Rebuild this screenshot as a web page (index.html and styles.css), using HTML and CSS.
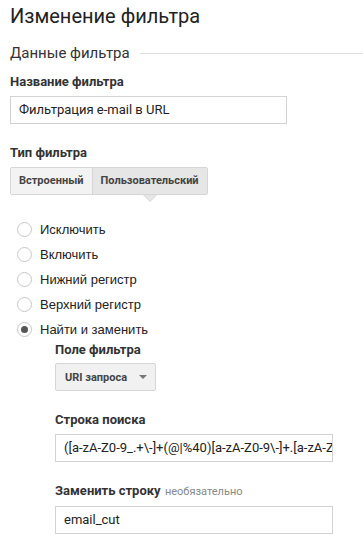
FILE: index.html
```html
<!DOCTYPE html>
<html>
<head>
<meta charset="utf-8">
<link rel="stylesheet" href="styles.css">
</head>
<body>
<div class="page">
  <h1 class="title">Изменение фильтра</h1>
  <div class="section-head"><span class="section-name">Данные фильтра</span><span class="section-line"></span></div>

  <div class="label name-label">Название фильтра</div>
  <div class="input name-input">Фильтрация e-mail в URL</div>

  <div class="label type-label">Тип фильтра</div>
  <div class="tabs">
    <div class="tab">Встроенный</div>
    <div class="tab active">Пользовательский</div>
  </div>

  <ul class="radios">
    <li class="radio"><span class="circle"></span>Исключить</li>
    <li class="radio"><span class="circle"></span>Включить</li>
    <li class="radio"><span class="circle"></span>Нижний регистр</li>
    <li class="radio"><span class="circle"></span>Верхний регистр</li>
    <li class="radio"><span class="circle checked"></span>Найти и заменить</li>
  </ul>

  <div class="sub">
    <div class="label field-label">Поле фильтра</div>
    <div class="select"><span>URI запроса</span><span class="caret"></span></div>

    <div class="label search-label">Строка поиска</div>
    <div class="input wide">([a-zA-Z0-9_.+\-]+(@|%40)[a-zA-Z0-9\-]+.[a-zA-Z0-9\-.]+)</div>

    <div class="label replace-label">Заменить строку <span class="optional">необязательно</span></div>
    <div class="input wide">email_cut</div>
  </div>
</div>
</body>
</html>
```
FILE: styles.css
```css
html, body {
  margin: 0;
  padding: 0;
  background: #fff;
}
.page {
  padding: 4px 0 0 10px;
  font-family: Roboto, "Liberation Sans", sans-serif;
  color: #222;
}
.title {
  margin: 0;
  font-size: 20px;
  font-weight: 400;
  line-height: 24px;
  color: #222;
}
.section-head {
  display: flex;
  align-items: center;
  margin-top: 15px;
  height: 20px;
}
.section-name {
  font-size: 15px;
  font-weight: 400;
  color: #333;
  line-height: 20px;
}
.section-line {
  flex: 1;
  height: 1px;
  background: #e0e0e0;
  margin-left: 10px;
}
.label {
  font-size: 13px;
  font-weight: 700;
  color: #333;
  line-height: 16px;
  margin-top: 21px;
}
.name-label {
  margin-top: 11px;
}
.input {
  box-sizing: border-box;
  height: 28px;
  border: 1px solid #d3d3d3;
  padding: 0 8px;
  font-size: 13px;
  line-height: 26px;
  color: #222;
  white-space: nowrap;
  overflow: hidden;
  margin-top: 6px;
}
.name-input {
  width: 277px;
}
.tabs {
  display: flex;
  margin-top: 6px;
  width: max-content;
  border: 1px solid #d6d6d6;
  border-radius: 2px;
}
.tab {
  position: relative;
  font-size: 11px;
  font-weight: 700;
  color: #444;
  background: #f3f3f3;
  line-height: 26px;
  padding: 0 8px;
}
.tab + .tab {
  border-left: 1px solid #d6d6d6;
}
.tab.active {
  background: #e6e6e6;
}
.tab.active::before {
  content: "";
  position: absolute;
  left: 50%;
  bottom: -8px;
  margin-left: -7px;
  border-left: 7px solid transparent;
  border-right: 7px solid transparent;
  border-top: 7px solid #d6d6d6;
}
.tab.active::after {
  content: "";
  position: absolute;
  left: 50%;
  bottom: -7px;
  margin-left: -6px;
  border-left: 6px solid transparent;
  border-right: 6px solid transparent;
  border-top: 6px solid #e6e6e6;
}
.radios {
  list-style: none;
  margin: 22px 0 0 0;
  padding: 0;
}
.radio {
  display: flex;
  align-items: center;
  height: 25px;
  font-family: "Liberation Sans", Arial, sans-serif;
  font-size: 13px;
  color: #222;
}
.circle {
  box-sizing: border-box;
  width: 15px;
  height: 15px;
  border: 1px solid #c8c8c8;
  border-radius: 50%;
  margin: 0 8px 0 7px;
  display: flex;
  align-items: center;
  justify-content: center;
}
.circle.checked::after {
  content: "";
  width: 7px;
  height: 7px;
  border-radius: 50%;
  background: #555;
}
.sub {
  padding-left: 45px;
}
.sub .field-label {
  margin-top: 0;
}
.select {
  display: flex;
  align-items: center;
  justify-content: space-between;
  box-sizing: border-box;
  width: 101px;
  height: 28px;
  margin-top: 5px;
  padding: 0 8px 0 9px;
  background: #f1f1f1;
  border: 1px solid #d6d6d6;
  border-radius: 2px;
  font-size: 11px;
  font-weight: 700;
  color: #444;
}
.caret {
  width: 0;
  height: 0;
  border-left: 4px solid transparent;
  border-right: 4px solid transparent;
  border-top: 4px solid #777;
}
.wide {
  width: 278px;
}
.optional {
  font-size: 11px;
  font-weight: 400;
  color: #888;
  margin-left: 1px;
}
```
